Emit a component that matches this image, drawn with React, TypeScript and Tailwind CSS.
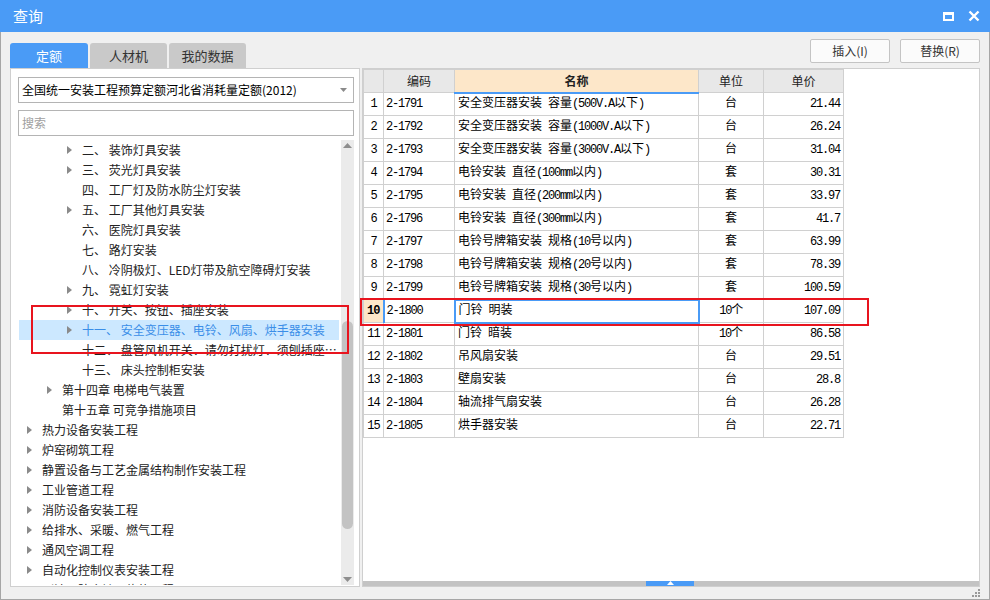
import { Fragment } from 'react';

const ui = "font-['Microsoft_YaHei','Noto_Sans_CJK_SC',sans-serif]";
const cell = "font-['Liberation_Mono','Noto_Sans_CJK_SC',monospace]";

type TreeRow = { lvl: number; arrow: boolean; text: string; active?: boolean };

const treeRows: TreeRow[] = [
    { lvl: 3, arrow: true, text: '二、 装饰灯具安装' },
    { lvl: 3, arrow: true, text: '三、 荧光灯具安装' },
    { lvl: 3, arrow: false, text: '四、 工厂灯及防水防尘灯安装' },
    { lvl: 3, arrow: true, text: '五、 工厂其他灯具安装' },
    { lvl: 3, arrow: false, text: '六、 医院灯具安装' },
    { lvl: 3, arrow: false, text: '七、 路灯安装' },
    { lvl: 3, arrow: false, text: '八、 冷阴极灯、LED灯带及航空障碍灯安装' },
    { lvl: 3, arrow: true, text: '九、 霓虹灯安装' },
    { lvl: 3, arrow: true, text: '十、 开关、按钮、插座安装' },
    { lvl: 3, arrow: true, text: '十一、 安全变压器、电铃、风扇、烘手器安装', active: true },
    { lvl: 3, arrow: false, text: '十二、 盘管风机开关、请勿打扰灯、须刨插座箱安装' },
    { lvl: 3, arrow: false, text: '十三、 床头控制柜安装' },
    { lvl: 2, arrow: true, text: '第十四章 电梯电气装置' },
    { lvl: 2, arrow: false, text: '第十五章 可竞争措施项目' },
    { lvl: 1, arrow: true, text: '热力设备安装工程' },
    { lvl: 1, arrow: true, text: '炉窑砌筑工程' },
    { lvl: 1, arrow: true, text: '静置设备与工艺金属结构制作安装工程' },
    { lvl: 1, arrow: true, text: '工业管道工程' },
    { lvl: 1, arrow: true, text: '消防设备安装工程' },
    { lvl: 1, arrow: true, text: '给排水、采暖、燃气工程' },
    { lvl: 1, arrow: true, text: '通风空调工程' },
    { lvl: 1, arrow: true, text: '自动化控制仪表安装工程' },
    { lvl: 1, arrow: true, text: '刷油、防腐蚀、绝热工程' },
];

const rows = [
    ['2-1791', '安全变压器安装 容量(500V.A以下)', '台', '21.44'],
    ['2-1792', '安全变压器安装 容量(1000V.A以下)', '台', '26.24'],
    ['2-1793', '安全变压器安装 容量(3000V.A以下)', '台', '31.04'],
    ['2-1794', '电铃安装 直径(100mm以内)', '套', '30.31'],
    ['2-1795', '电铃安装 直径(200mm以内)', '套', '33.97'],
    ['2-1796', '电铃安装 直径(300mm以内)', '套', '41.7'],
    ['2-1797', '电铃号牌箱安装 规格(10号以内)', '套', '63.99'],
    ['2-1798', '电铃号牌箱安装 规格(20号以内)', '套', '78.39'],
    ['2-1799', '电铃号牌箱安装 规格(30号以内)', '套', '100.59'],
    ['2-1800', '门铃 明装', '10个', '107.09'],
    ['2-1801', '门铃 暗装', '10个', '86.58'],
    ['2-1802', '吊风扇安装', '台', '29.51'],
    ['2-1803', '壁扇安装', '台', '28.8'],
    ['2-1804', '轴流排气扇安装', '台', '26.28'],
    ['2-1805', '烘手器安装', '台', '22.71'],
];

// half-width ASCII runs are narrowed to 6px per char like the grid's bitmap font
function Mixed({ text }: { text: string }) {
    const parts = text.match(/[\x20-\x7e]+|[^\x20-\x7e]+/g) ?? [];
    return (
        <>
            {parts.map((p, i) =>
                /^[\x20-\x7e]/.test(p) ? (
                    <span key={i} className="tracking-[-1.2px]">
                        {p}
                    </span>
                ) : (
                    <span key={i}>{p}</span>
                ),
            )}
        </>
    );
}

function Arrow() {
    return (
        <svg width="5" height="8" viewBox="0 0 5 8" className="shrink-0">
            <path d="M0 0 L5 4 L0 8 Z" fill="#8a8a8a" />
        </svg>
    );
}

export default function App() {
    return (
        <div className={`relative flex h-[600px] w-[990px] flex-col overflow-hidden bg-[#f0f0f0] ${ui}`}>
            {/* Title bar */}
            <div className="flex h-[32px] shrink-0 items-center justify-between bg-[#4a9bf6] pl-[13px] pr-[10px] text-white">
                <span className="text-[15px]">查询</span>
                <div className="flex items-center gap-[14px]">
                    <div className="h-[9px] w-[11px] border-[2px] border-t-[3px] border-white" />
                    <svg width="12" height="12" viewBox="0 0 12 12">
                        <path d="M1.5 1.5 L10.5 10.5 M10.5 1.5 L1.5 10.5" stroke="white" strokeWidth="2.4" />
                    </svg>
                </div>
            </div>

            <div className="flex flex-1 flex-col border-x border-b border-[#a6a6a6] px-[9px]">
                {/* Tabs + buttons */}
                <div className="flex h-[36px] shrink-0 justify-between">
                    <div className="flex items-end gap-[2px] text-[13px]">
                        <div className="flex h-[25px] w-[78px] items-center justify-center rounded-t-[3px] bg-[#4a9bf6] text-white">定额</div>
                        <div className="flex h-[25px] w-[77px] items-center justify-center rounded-t-[3px] bg-[#c9c9c9] text-[#333]">人材机</div>
                        <div className="flex h-[25px] w-[77px] items-center justify-center rounded-t-[3px] bg-[#c9c9c9] text-[#333]">我的数据</div>
                    </div>
                    <div className="mt-[7px] flex gap-[10px] text-[12px] text-[#333]">
                        <button className="h-[24px] w-[80px] rounded-[2px] border border-[#c4c4c4] bg-[#fbfbfb]">插入(I)</button>
                        <button className="h-[24px] w-[80px] rounded-[2px] border border-[#c4c4c4] bg-[#fbfbfb]">替换(R)</button>
                    </div>
                </div>

                {/* Panels */}
                <div className="flex h-[519px] shrink-0 gap-[2px]">
                    {/* Left tree panel */}
                    <div className="flex w-[350px] flex-col border border-[#cfcfcf] bg-white">
                        <div className="mx-[7px] mr-[5px] mt-[8px] flex h-[26px] items-center justify-between border border-[#b4b4b4] pl-[3px] pr-[6px] text-[12px] text-black">
                            <span>全国统一安装工程预算定额河北省消耗量定额(2012)</span>
                            <svg width="7" height="4" viewBox="0 0 7 4">
                                <path d="M0 0 L7 0 L3.5 4 Z" fill="#8a8a8a" />
                            </svg>
                        </div>
                        <div className="mx-[7px] mr-[5px] mt-[7px] flex h-[26px] items-center border border-[#b4b4b4] pl-[3px] text-[12px] text-[#a0a0a0]">
                            搜索
                        </div>
                        <div className="mt-[4px] flex min-h-0 flex-1 pb-[1px] pr-[5px]">
                            <div className="min-w-0 flex-1 overflow-hidden pl-[8px] pr-[2px] text-[12px]">
                                {treeRows.map((r, i) => (
                                    <div
                                        key={i}
                                        className={`flex h-[20px] items-center ${r.active ? 'bg-[#cce8ff] text-[#3a8ee8]' : 'text-[#222]'}`}
                                        style={{ paddingLeft: 8 + (r.lvl - 1) * 20 }}
                                    >
                                        <div className="w-[15px] shrink-0">{r.arrow && <Arrow />}</div>
                                        <span className="truncate whitespace-pre">{r.text}</span>
                                    </div>
                                ))}
                            </div>
                            {/* Vertical scrollbar */}
                            <div className="flex w-[13px] shrink-0 flex-col items-center bg-[#ebebeb] py-[3px]">
                                <svg width="9" height="5" viewBox="0 0 9 5">
                                    <path d="M0 5 L9 5 L4.5 0 Z" fill="#8e8e8e" />
                                </svg>
                                <div className="mt-[173px] h-[208px] w-[11px] rounded-full bg-[#c3c3c3]" />
                                <div className="flex-1" />
                                <svg width="9" height="5" viewBox="0 0 9 5">
                                    <path d="M0 0 L9 0 L4.5 5 Z" fill="#8e8e8e" />
                                </svg>
                            </div>
                        </div>
                    </div>

                    {/* Right table panel */}
                    <div className="flex flex-1 flex-col border border-[#cfcfcf] bg-white">
                        <div className="flex-1">
                            <table className={`border-collapse text-[12px] text-black ${cell}`}>
                                <colgroup>
                                    <col className="w-[20px]" />
                                    <col className="w-[71px]" />
                                    <col className="w-[244px]" />
                                    <col className="w-[65px]" />
                                    <col className="w-[80px]" />
                                </colgroup>
                                <thead>
                                    <tr className={`h-[23px] ${ui} text-[12px] text-[#222]`}>
                                        <th className="border border-[#d0d0d0] bg-[#e8e8e8] font-normal" />
                                        <th className="border border-[#d0d0d0] bg-[#e8e8e8] font-normal">编码</th>
                                        <th className="border border-[#d0d0d0] border-b-[2px] border-b-[#4a9bf6] bg-[#fde7c9] font-bold">名称</th>
                                        <th className="border border-[#d0d0d0] bg-[#e8e8e8] font-normal">单位</th>
                                        <th className="border border-[#d0d0d0] bg-[#e8e8e8] font-normal">单价</th>
                                    </tr>
                                </thead>
                                <tbody>
                                    {rows.map((r, i) => {
                                        const sel = i === 9;
                                        return (
                                            <Fragment key={i}>
                                                <tr className="h-[23px]">
                                                    <td
                                                        className={`border border-[#d0d0d0] text-center ${
                                                            sel ? 'border-r-[2px] border-r-[#4a9bf6] bg-[#fde7c9] font-bold' : ''
                                                        }`}
                                                    >
                                                        <span className="tracking-[-1px]">{i + 1}</span>
                                                    </td>
                                                    <td className="border border-[#d0d0d0] pl-[2px]">
                                                        <Mixed text={r[0]} />
                                                    </td>
                                                    <td
                                                        className={`whitespace-pre pl-[3px] ${
                                                            sel ? 'border-[2px] border-[#4a9bf6]' : 'border border-[#d0d0d0]'
                                                        }`}
                                                    >
                                                        <Mixed text={r[1]} />
                                                    </td>
                                                    <td className="border border-[#d0d0d0] text-center">
                                                        <Mixed text={r[2]} />
                                                    </td>
                                                    <td className="border border-[#d0d0d0] pr-[3px] text-right">
                                                        <Mixed text={r[3]} />
                                                    </td>
                                                </tr>
                                            </Fragment>
                                        );
                                    })}
                                </tbody>
                            </table>
                        </div>
                        {/* Horizontal scrollbar */}
                        <div className="flex h-[5px] shrink-0 justify-center bg-[#c3c3c3]">
                            <div className="ml-[-2px] flex w-[48px] items-start justify-center bg-[#4a9bf6]">
                                <svg width="7" height="4" viewBox="0 0 7 4">
                                    <path d="M0 4 L7 4 L3.5 0 Z" fill="white" />
                                </svg>
                            </div>
                        </div>
                    </div>
                </div>
                <div className="flex flex-1 items-end justify-end pb-[2px]">
                    <svg width="8" height="8" viewBox="0 0 8 8">
                        <rect x="6" y="0" width="2" height="2" fill="#9a9a9a" />
                        <rect x="3" y="3" width="2" height="2" fill="#9a9a9a" />
                        <rect x="6" y="3" width="2" height="2" fill="#9a9a9a" />
                        <rect x="0" y="6" width="2" height="2" fill="#9a9a9a" />
                        <rect x="3" y="6" width="2" height="2" fill="#9a9a9a" />
                        <rect x="6" y="6" width="2" height="2" fill="#9a9a9a" />
                    </svg>
                </div>
            </div>

            {/* Annotation boxes */}
            <div className="absolute left-[31px] top-[305px] h-[49px] w-[318px] border-[2px] border-[#e8141e]" />
            <div className="absolute left-[360px] top-[298px] h-[28px] w-[509px] border-[2px] border-[#e8141e]" />
        </div>
    );
}
